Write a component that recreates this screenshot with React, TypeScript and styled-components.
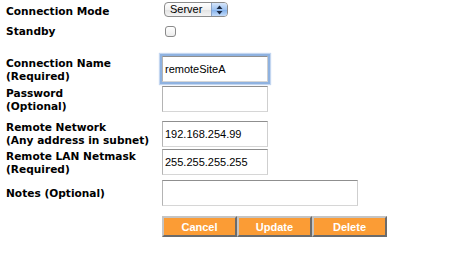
import styled, { createGlobalStyle } from "styled-components";

const GlobalStyle = createGlobalStyle`
  html, body {
    margin: 0;
    padding: 0;
    background: #ffffff;
  }
`;

export default function App() {
  return (
    <>
      <GlobalStyle />
      <Page>
        <Row $h={20} $mt={0}>
          <Label $pt={2}>Connection Mode</Label>
          <SelectBox>
            <SelectText>Server</SelectText>
            <Stepper>
              <svg width="7" height="10" viewBox="0 0 7 10">
                <path d="M3.5 0.5 L6.5 4 L0.5 4 Z" fill="#1c2a44" />
                <path d="M3.5 9.5 L6.5 6 L0.5 6 Z" fill="#1c2a44" />
              </svg>
            </Stepper>
          </SelectBox>
        </Row>
        <Row $h={22} $mt={0}>
          <Label>Standby</Label>
          <Checkbox />
        </Row>
        <Row $h={28} $mt={13}>
          <Label $pt={2}>
            Connection Name
            <br />
            (Required)
          </Label>
          <TextInput $focused defaultValue="remoteSiteA" />
        </Row>
        <Row $h={28} $mt={2}>
          <Label $pt={2}>
            Password
            <br />
            (Optional)
          </Label>
          <TextInput type="password" />
        </Row>
        <Row $h={28} $mt={7}>
          <Label>
            Remote Network
            <br />
            (Any address in subnet)
          </Label>
          <TextInput defaultValue="192.168.254.99" />
        </Row>
        <Row $h={28} $mt={0}>
          <Label $pt={2}>
            Remote LAN Netmask
            <br />
            (Required)
          </Label>
          <TextInput defaultValue="255.255.255.255" />
        </Row>
        <Row $h={28} $mt={3}>
          <Label>Notes (Optional)</Label>
          <TextInput $w={196} />
        </Row>
        <Row $h={21} $mt={9}>
          <span />
          <ButtonBar>
            <ActionButton>Cancel</ActionButton>
            <ActionButton>Update</ActionButton>
            <ActionButton>Delete</ActionButton>
          </ButtonBar>
        </Row>
      </Page>
    </>
  );
}

const Page = styled.div`
  display: flex;
  flex-direction: column;
  padding-left: 6px;
  width: 466px;
`;

const Row = styled.div<{ $h: number; $mt: number }>`
  display: grid;
  grid-template-columns: 156px auto;
  align-items: center;
  height: ${(p) => p.$h}px;
  margin-top: ${(p) => p.$mt}px;
`;

const Label = styled.div<{ $pt?: number }>`
  font-family: "DejaVu Sans", Verdana, sans-serif;
  font-weight: bold;
  font-size: 10.6px;
  line-height: 13px;
  color: #000000;
  padding-top: ${(p) => p.$pt ?? 0}px;
  white-space: nowrap;
`;

const SelectBox = styled.div`
  display: flex;
  align-items: stretch;
  align-self: start;
  margin-top: 2px;
  margin-left: 2px;
  width: 64px;
  height: 15px;
  box-sizing: border-box;
  border: 1px solid #8c8c8c;
  border-radius: 4px;
  overflow: hidden;
  background: linear-gradient(#ffffff, #f1f1f1 50%, #e2e2e2 51%, #f4f4f4);
`;

const SelectText = styled.span`
  flex: 1;
  font-family: "Liberation Sans", Arial, sans-serif;
  font-size: 11px;
  line-height: 13px;
  padding-left: 5px;
  color: #000000;
`;

const Stepper = styled.span`
  display: flex;
  align-items: center;
  justify-content: center;
  width: 15px;
  border-left: 1px solid #8aa3c8;
  background: linear-gradient(#d6e6fb, #9fc3f1 50%, #7eaeeb 51%, #c4dcfa);
`;

const Checkbox = styled.span`
  display: block;
  margin-left: 3px;
  width: 11px;
  height: 11px;
  box-sizing: border-box;
  border: 1px solid #8a8a8a;
  border-radius: 3px;
  background: linear-gradient(#ffffff, #ececec);
`;

const TextInput = styled.input<{ $w?: number; $focused?: boolean }>`
  width: ${(p) => p.$w ?? 106}px;
  height: 26px;
  box-sizing: border-box;
  margin: 0;
  padding: 0 2px;
  font-family: "Liberation Sans", Arial, sans-serif;
  font-size: 11px;
  color: #000000;
  background: #ffffff;
  border: 1px solid;
  border-color: #8f8f8f #cfcfcf #d6d6d6 #b4b4b4;
  outline: none;
  box-shadow: ${(p) =>
    p.$focused ? "0 0 0 2px #8fb2e0, 0 0 1px 3px #c3d6f0" : "none"};
`;

const ButtonBar = styled.div`
  display: flex;
  gap: 0;
`;

const ActionButton = styled.button`
  width: 75px;
  height: 21px;
  box-sizing: border-box;
  margin: 0;
  padding: 0;
  font-family: "Liberation Sans", Arial, sans-serif;
  font-weight: bold;
  font-size: 11px;
  color: #ffffff;
  background: #fb9c35;
  border: 2px solid;
  border-color: #c4c4c4 #6b6b6b #6b6b6b #c4c4c4;
  cursor: pointer;
`;
